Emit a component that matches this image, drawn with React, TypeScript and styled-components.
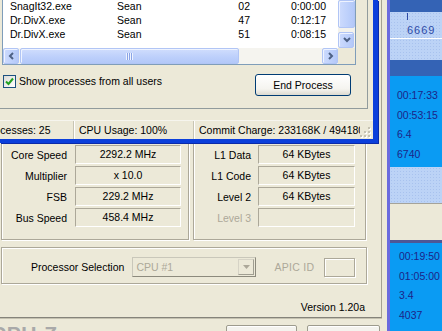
import React from "react";
import styled, { createGlobalStyle } from "styled-components";

const GlobalStyle = createGlobalStyle`
  html, body {
    margin: 0;
    padding: 0;
  }
  body {
    width: 442px;
    height: 331px;
    overflow: hidden;
    background: #ece9d8;
    font-family: "Liberation Sans", Arial, sans-serif;
    font-size: 10.5px;
    color: #000;
  }
`;

interface Proc {
  name: string;
  user: string;
  cpu: string;
  time: string;
}

const processes: Proc[] = [
  { name: "SnagIt32.exe", user: "Sean", cpu: "02", time: "0:00:00" },
  { name: "Dr.DivX.exe", user: "Sean", cpu: "47", time: "0:12:17" },
  { name: "Dr.DivX.exe", user: "Sean", cpu: "51", time: "0:08:15" },
];

const clocks = [
  { label: "Core Speed", value: "2292.2 MHz" },
  { label: "Multiplier", value: "x 10.0" },
  { label: "FSB", value: "229.2 MHz" },
  { label: "Bus Speed", value: "458.4 MHz" },
];

const cache = [
  { label: "L1 Data", value: "64 KBytes" },
  { label: "L1 Code", value: "64 KBytes" },
  { label: "Level 2", value: "64 KBytes" },
  { label: "Level 3", value: "", disabled: true },
];

const Chevron = ({ dir }: { dir: "left" | "right" | "down" }) => {
  const pts =
    dir === "left" ? "6,2 3,5 6,8" : dir === "right" ? "3,2 6,5 3,8" : "2,3 5,6 8,3";
  return (
    <svg width="9" height="10" viewBox="0 0 9 10">
      <polyline points={pts} fill="none" stroke="#4d6185" strokeWidth="2" />
    </svg>
  );
};

const App: React.FC = () => {
  return (
    <Desktop>
      <GlobalStyle />

      <CpuzWindow>
        <CpuzPanel>
          <GroupRow>
            <GroupBox $w={188} $h={107}>
              {clocks.map((c) => (
                <FieldRow key={c.label} $label={65} $gap={8} $box={106}>
                  <FieldLabel>{c.label}</FieldLabel>
                  <ValueBox>{c.value}</ValueBox>
                </FieldRow>
              ))}
            </GroupBox>
            <GroupBox $w={173} $h={107}>
              {cache.map((c) => (
                <FieldRow key={c.label} $label={57} $gap={7} $box={97}>
                  <FieldLabel $disabled={c.disabled}>{c.label}</FieldLabel>
                  <ValueBox>{c.value}</ValueBox>
                </FieldRow>
              ))}
            </GroupBox>
          </GroupRow>
          <SelectionBox>
            <FieldLabel>Processor Selection</FieldLabel>
            <Combo>
              <ComboText>CPU #1</ComboText>
              <ComboButton>
                <svg width="7" height="4" viewBox="0 0 7 4">
                  <polygon points="0,0 7,0 3.5,4" fill="#aca899" />
                </svg>
              </ComboButton>
            </Combo>
            <ApicLabel>APIC ID</ApicLabel>
            <ApicBox />
          </SelectionBox>
          <Version>Version 1.20a</Version>
        </CpuzPanel>
        <CpuzBottom>
          <Logo>CPU-Z</Logo>
          <BottomButton $w={71} />
          <BottomButton $w={73} />
        </CpuzBottom>
      </CpuzWindow>

      <TaskWindow>
        <TabPage>
          <ListBox>
            <ListMain>
              <Rows>
                {processes.map((p, i) => (
                  <Row key={i}>
                    <span>{p.name}</span>
                    <span>{p.user}</span>
                    <RightCell>{p.cpu}</RightCell>
                    <RightCell>{p.time}</RightCell>
                  </Row>
                ))}
              </Rows>
              <VScroll>
                <VThumb />
                <VTrack />
                <ScrollButton>
                  <Chevron dir="down" />
                </ScrollButton>
              </VScroll>
            </ListMain>
            <HScrollRow>
              <ScrollButton>
                <Chevron dir="left" />
              </ScrollButton>
              <HThumb>
                <Grip />
              </HThumb>
              <HTrack />
              <ScrollButton>
                <Chevron dir="right" />
              </ScrollButton>
              <ScrollCorner />
            </HScrollRow>
          </ListBox>
          <Footer>
            <CheckWrap>
              <CheckBox>
                <svg width="11" height="11" viewBox="0 0 11 11">
                  <polyline
                    points="2,5.5 4.5,8 9,2.5"
                    fill="none"
                    stroke="#21a121"
                    strokeWidth="2"
                  />
                </svg>
              </CheckBox>
              <span>Show processes from all users</span>
            </CheckWrap>
            <XpButton>End Process</XpButton>
          </Footer>
        </TabPage>
        <StatusBar>
          <Pane $w={74} $indent={-16}>
            Processes: 25
          </Pane>
          <Pane $w={119}>CPU Usage: 100%</Pane>
          <Pane $last>Commit Charge: 233168K / 494180K</Pane>
          <SizeGrip>
            <svg width="11" height="11" viewBox="0 0 11 11">
              {[
                [8, 0],
                [8, 4],
                [4, 4],
                [8, 8],
                [4, 8],
                [0, 8],
              ].map(([x, y], i) => (
                <g key={i}>
                  <rect x={x + 1} y={y + 1} width="2" height="2" fill="#fff" />
                  <rect x={x} y={y} width="2" height="2" fill="#c5c2b2" />
                </g>
              ))}
            </svg>
          </SizeGrip>
        </StatusBar>
      </TaskWindow>

      <SideWindow>
        <Band $h={12} $tone="dark" />
        <Band $h={27} $tone="light" $line="#ffffff">
          <Tick />
          <Count>6669</Count>
        </Band>
        <Band $h={21} $tone="light" />
        <Band $h={16} $tone="dark" />
        <Band $h={91} $tone="bright" $pad={7} $top={10}>
          <Stat>00:17:33</Stat>
          <Stat>00:53:15</Stat>
          <Stat>6.4</Stat>
          <Stat>6740</Stat>
        </Band>
        <Band $h={37} $tone="light" $line="#a5a39a" />
        <Band $h={36} $tone="beige" />
        <Band $tone="bright" $pad={9} $top={4} $topLine>
          <Stat>00:19:50</Stat>
          <Stat>01:05:00</Stat>
          <Stat>3.4</Stat>
          <Stat>4037</Stat>
        </Band>
      </SideWindow>
    </Desktop>
  );
};

export default App;

const Desktop = styled.div`
  position: relative;
  width: 442px;
  height: 331px;
  overflow: hidden;
  background: #ece9d8;
`;

/* ---------- CPU-Z ---------- */

const CpuzWindow = styled.div`
  position: absolute;
  left: 0;
  top: 0;
  z-index: 1;
  width: 387px;
  height: 360px;
  background: #ece9d8;
`;

const CpuzPanel = styled.div`
  box-sizing: border-box;
  width: 382px;
  height: 318px;
  padding: 133px 0 0 1px;
  border-right: 1px solid #a3a192;
  border-bottom: 1px solid #85837a;
  box-shadow: 0 1px 0 #c4c1b0;
  display: flex;
  flex-direction: column;
`;

const GroupRow = styled.div`
  display: flex;
  gap: 4px;
`;

const GroupBox = styled.div<{ $w: number; $h: number }>`
  box-sizing: border-box;
  width: ${(p) => p.$w}px;
  height: ${(p) => p.$h}px;
  padding-top: 11px;
  border: 1px solid #aca899;
  box-shadow: inset 1px 1px 0 #fff, 1px 1px 0 #fff;
  display: flex;
  flex-direction: column;
  gap: 2px;
`;

const FieldRow = styled.div<{ $label: number; $gap: number; $box: number }>`
  display: grid;
  grid-template-columns: ${(p) => p.$label}px ${(p) => p.$box}px;
  column-gap: ${(p) => p.$gap}px;
  align-items: center;
  height: 19px;
`;

const FieldLabel = styled.div<{ $disabled?: boolean }>`
  text-align: right;
  white-space: nowrap;
  color: ${(p) => (p.$disabled ? "#aca899" : "#000")};
`;

const ValueBox = styled.div`
  box-sizing: border-box;
  height: 19px;
  line-height: 17px;
  text-align: center;
  border-top: 1px solid #aca899;
  border-left: 1px solid #aca899;
  border-bottom: 1px solid #fff;
  border-right: 1px solid #fff;
`;

const SelectionBox = styled.div`
  box-sizing: border-box;
  width: 366px;
  height: 37px;
  margin-top: 7px;
  padding: 3px 0 0 29px;
  border: 1px solid #aca899;
  box-shadow: inset 1px 1px 0 #fff, 1px 1px 0 #fff;
  display: flex;
  align-items: center;
`;

const Combo = styled.div`
  box-sizing: border-box;
  width: 124px;
  height: 20px;
  margin-left: 8px;
  border: 1px solid #c9c7ba;
  border-right-color: #8c8a7d;
  border-bottom-color: #8c8a7d;
  display: flex;
  align-items: center;
  justify-content: space-between;
  padding: 0 1px 0 3px;
`;

const ComboText = styled.span`
  color: #aca899;
`;

const ComboButton = styled.div`
  box-sizing: border-box;
  width: 16px;
  height: 16px;
  border: 1px solid #d6d3c6;
  border-right-color: #a09e91;
  border-bottom-color: #a09e91;
  display: flex;
  align-items: center;
  justify-content: center;
`;

const ApicLabel = styled.span`
  margin-left: 18px;
  color: #aca899;
  letter-spacing: 0.3px;
`;

const ApicBox = styled.div`
  box-sizing: border-box;
  width: 31px;
  height: 19px;
  margin-left: 10px;
  border: 1px solid #aca899;
  box-shadow: inset 1px 1px 0 #fff, 1px 1px 0 #fff;
`;

const Version = styled.div`
  margin-top: 17px;
  padding-right: 16px;
  text-align: right;
  line-height: 13px;
`;

const CpuzBottom = styled.div`
  display: flex;
  align-items: flex-start;
  gap: 10px;
  padding: 7px 7px 0 0;
`;

const Logo = styled.div`
  margin: -2px auto 0 -9px;
  font-size: 21px;
  font-weight: bold;
  line-height: 22px;
  color: #a9a9a9;
  letter-spacing: 0.5px;
`;

const BottomButton = styled.div<{ $w: number }>`
  box-sizing: border-box;
  width: ${(p) => p.$w}px;
  height: 23px;
  border: 1px solid #9d9b8d;
  border-radius: 2px;
  box-shadow: inset 0 1px 0 #fff;
  background: #f4f3ee;
`;

/* ---------- Task Manager ---------- */

const TaskWindow = styled.div`
  position: absolute;
  left: 0;
  top: 0;
  z-index: 2;
  box-sizing: border-box;
  width: 378px;
  height: 143px;
  background: #ece9d8;
  border-right: 5px solid #0b3fdb;
  border-bottom: 4px solid #0b3fdb;
  box-shadow: 1px 1px 0 #0a2aa8;
  display: flex;
  flex-direction: column;
`;

const TabPage = styled.div`
  box-sizing: border-box;
  width: 368px;
  height: 109px;
  padding: 0 12px 0 2px;
  border-right: 1px solid #919b9c;
  border-bottom: 1px solid #919b9c;
`;

const ListBox = styled.div`
  box-sizing: border-box;
  width: 354px;
  height: 65px;
  border: 1px solid #7f9db9;
  border-top: none;
  background: #fff;
  display: flex;
  flex-direction: column;
`;

const ListMain = styled.div`
  display: flex;
  height: 48px;
`;

const Rows = styled.div`
  flex: 1;
  overflow: hidden;
  margin-top: -1px;
`;

const Row = styled.div`
  display: grid;
  grid-template-columns: 107px 106px 27px 76px;
  height: 14px;
  line-height: 14px;
  padding-left: 7px;
  white-space: nowrap;
`;

const RightCell = styled.span`
  text-align: right;
`;

const VScroll = styled.div`
  width: 17px;
  display: flex;
  flex-direction: column;
  background: #f3f2ec;
`;

const scrollFace = `
  box-sizing: border-box;
  border: 1px solid #b1c5f5;
  border-radius: 2px;
  background: linear-gradient(90deg, #cddbfd, #bdd0fb 60%, #b3c8f8);
  box-shadow: inset 1px 1px 0 #eef3ff;
`;

const VThumb = styled.div`
  ${scrollFace}
  height: 28px;
`;

const VTrack = styled.div`
  flex: 1;
`;

const ScrollButton = styled.div`
  ${scrollFace}
  flex: 0 0 16px;
  width: 16px;
  height: 16px;
  display: flex;
  align-items: center;
  justify-content: center;
`;

const HScrollRow = styled.div`
  display: flex;
  height: 16px;
  background: #f5f4ef;
`;

const HThumb = styled.div`
  ${scrollFace}
  background: linear-gradient(180deg, #d0ddfd, #bccffb 60%, #b3c8f8);
  flex: 0 0 219px;
  margin-left: 1px;
  display: flex;
  align-items: center;
  justify-content: center;
`;

const Grip = styled.div`
  width: 7px;
  height: 7px;
  background: repeating-linear-gradient(
    90deg,
    #eef3ff 0 1px,
    #8aa4e6 1px 2px
  );
`;

const HTrack = styled.div`
  flex: 1;
`;

const ScrollCorner = styled.div`
  flex: 0 0 17px;
  background: #ece9d8;
`;

const Footer = styled.div`
  display: flex;
  justify-content: space-between;
  align-items: flex-start;
  margin-top: 9px;
  padding-left: 1px;
`;

const CheckWrap = styled.div`
  display: flex;
  align-items: center;
  gap: 3px;
  margin-top: 1px;
  line-height: 13px;
`;

const CheckBox = styled.div`
  box-sizing: border-box;
  width: 13px;
  height: 13px;
  border: 1px solid #1c5180;
  background: linear-gradient(135deg, #dcdcd7, #fff);
  display: flex;
  align-items: center;
  justify-content: center;
`;

const XpButton = styled.div`
  box-sizing: border-box;
  width: 96px;
  height: 22px;
  margin-right: 4px;
  border: 1px solid #003c74;
  border-radius: 3px;
  background: linear-gradient(180deg, #fff 0%, #f5f4ef 70%, #dcdad0 100%);
  text-align: center;
  line-height: 20px;
`;

const StatusBar = styled.div`
  margin-top: auto;
  height: 18px;
  border-top: 1px solid #f6f5ee;
  display: flex;
  align-items: center;
`;

const Pane = styled.div<{ $w?: number; $indent?: number; $last?: boolean }>`
  box-sizing: border-box;
  ${(p) => (p.$w ? `flex: 0 0 ${p.$w}px;` : "flex: 1;")}
  height: 18px;
  line-height: 18px;
  margin-left: ${(p) => (p.$indent ? 0 : 1)}px;
  padding-left: ${(p) => (p.$indent ? 0 : 4)}px;
  text-indent: ${(p) => p.$indent ?? 0}px;
  white-space: nowrap;
  overflow: hidden;
  border-right: ${(p) => (p.$last ? "none" : "1px solid #c8c5b4")};
  box-shadow: ${(p) => (p.$last ? "none" : "1px 0 0 #fff")};
`;

const SizeGrip = styled.div`
  flex: 0 0 13px;
  height: 18px;
  display: flex;
  align-items: flex-end;
  padding-bottom: 1px;
  box-sizing: border-box;
`;

/* ---------- right-hand window ---------- */

const SideWindow = styled.div`
  position: absolute;
  left: 387px;
  top: 0;
  z-index: 1;
  box-sizing: border-box;
  width: 55px;
  height: 331px;
  border-left: 3px solid #6a6ade;
  display: flex;
  flex-direction: column;
  overflow: hidden;
`;

const tones = {
  dark: "background: #3463b5;",
  light: `
    background-color: #bcd3f6;
    background-image: radial-gradient(#a8c2ee 0.6px, transparent 0.8px);
    background-size: 3px 3px;
  `,
  bright: "background: #0a9bf3;",
  beige: "background: #ece9d8;",
};

const Band = styled.div<{
  $h?: number;
  $tone: keyof typeof tones;
  $line?: string;
  $pad?: number;
  $top?: number;
  $topLine?: boolean;
}>`
  box-sizing: border-box;
  ${(p) => (p.$h ? `flex: 0 0 ${p.$h}px;` : "flex: 1;")}
  ${(p) => tones[p.$tone]}
  ${(p) => (p.$line ? `border-bottom: 1px solid ${p.$line};` : "")}
  ${(p) => (p.$topLine ? "border-top: 3px solid #4e5796;" : "")}
  padding-left: ${(p) => p.$pad ?? 0}px;
  padding-top: ${(p) => p.$top ?? 0}px;
`;

const Tick = styled.div`
  width: 1px;
  height: 7px;
  margin: 1px 0 0 17px;
  background: #2c4aa6;
`;

const Count = styled.div`
  margin: 4px 0 0 17px;
  font-size: 11px;
  line-height: 12px;
  letter-spacing: 1px;
  color: #2c4aa6;
`;

const Stat = styled.div`
  font-size: 10.5px;
  line-height: 19.5px;
  color: #1d2488;
  white-space: nowrap;
`;
